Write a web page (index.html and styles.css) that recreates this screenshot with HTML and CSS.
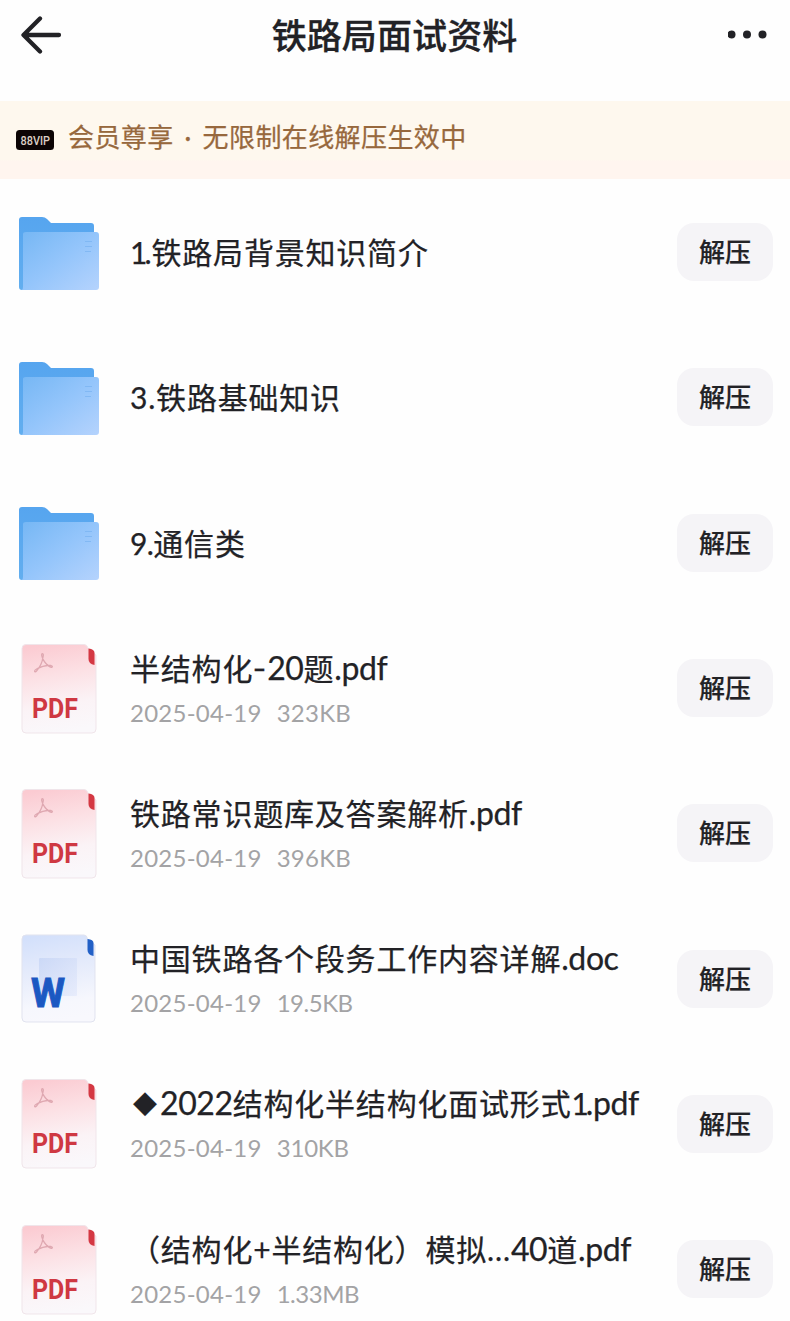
FILE: index.html
```html
<!DOCTYPE html>
<html lang="zh-CN">
<head>
<meta charset="utf-8">
<title>铁路局面试资料</title>
<link rel="stylesheet" href="styles.css">
</head>
<body>
<svg class="defs" aria-hidden="true">
  <defs>
    <linearGradient id="back" x1="0" y1="0" x2="0" y2="1"><stop offset="0" stop-color="#56a5ef"/><stop offset="1" stop-color="#62aeef"/></linearGradient>
    <linearGradient id="front" x1="0" y1="0" x2="1" y2="1"><stop offset="0" stop-color="#76b7f4"/><stop offset=".5" stop-color="#94c5fb"/><stop offset="1" stop-color="#b5d3fd"/></linearGradient>
    <linearGradient id="red" x1=".3" y1="0" x2=".45" y2="1"><stop offset="0" stop-color="#fbcbd2"/><stop offset=".35" stop-color="#fce0e4"/><stop offset=".7" stop-color="#fbf3f6"/><stop offset="1" stop-color="#faf8fb"/></linearGradient>
    <linearGradient id="blue" x1=".3" y1="0" x2=".45" y2="1"><stop offset="0" stop-color="#d3e0fb"/><stop offset=".4" stop-color="#e5ebfb"/><stop offset=".8" stop-color="#f6f7fd"/><stop offset="1" stop-color="#f8f8fd"/></linearGradient>
    <linearGradient id="pane" x1="0" y1="0" x2="1" y2="1"><stop offset="0" stop-color="#c5d4f5"/><stop offset="1" stop-color="#e3e9fb"/></linearGradient>
  </defs>
  <symbol id="folder" viewBox="0 0 82 76">
    <path d="M1 4Q1 1 4 1H24Q27 1 29 3L33 7H73Q76 7 76 10V60H5V74H4Q1 74 1 71Z" fill="url(#back)"/>
    <path d="M5 18Q5 16 8 16H78Q81 16 81 19V71Q81 74 78 74H4Q5 73 5 71Z" fill="url(#front)"/>
    <path d="M67 25.500h7M67 30.500h7M67 35.500h6" stroke="#78b2f1" stroke-width="1" fill="none" opacity=".7"/>
  </symbol>
  <symbol id="pdf" viewBox="0 0 78 92">
    <path d="M5 1.500H63Q66 1.500 67 5L75 12V86Q75 90 71 90H5Q1 90 1 86V5.500Q1 1.500 5 1.500Z" fill="url(#red)" stroke="#f0e5ea" stroke-width="1"/>
    <path d="M67.500 5.500Q73.500 6 73.500 10V22Q67.500 21 67.500 16Z" fill="#d43843"/>
    <path d="M21 13.500C19.500 9.500 23.500 9.500 22 14C21.500 18 19 24 15.500 28C13.500 30 12.500 27.500 15.500 26C20 23.500 25 22 30 22.500C33 23.500 30.500 25.500 27.500 23C24.500 20.500 22 17 21 13.500Z" fill="none" stroke="#dfa8b1" stroke-width="1.300"/>
  </symbol>
  <symbol id="doc" viewBox="0 0 78 92">
    <path d="M5 2H63Q66 2 66.500 6L74 12V85Q74 89 70 89H5Q1 89 1 85V6Q1 2 5 2Z" fill="url(#blue)" stroke="#e1e3ef" stroke-width="1"/>
    <path d="M66.500 6Q72.500 6.500 72.500 10V23Q66.500 22 66.500 17Z" fill="#2260c6"/>
    <rect x="18" y="25" width="38" height="38" rx="1" fill="url(#pane)" opacity=".75"/>
  </symbol>
</svg>
<header class="topbar">
  <svg class="back" viewBox="0 0 42 38"><path d="M19 2.500 2.500 19 19 35.500M3 19H38" fill="none" stroke="#222226" stroke-width="4.300" stroke-linecap="round" stroke-linejoin="round"/></svg>
  <h1>铁路局面试资料</h1>
  <svg class="more" viewBox="0 0 40 10"><g fill="#222226"><circle cx="3.500" cy="4.500" r="4"/><circle cx="19" cy="4.500" r="4"/><circle cx="34.500" cy="4.500" r="4"/></g></svg>
</header>
<div class="banner">
  <svg class="vip" viewBox="0 0 38 20"><rect width="38" height="20" rx="3.500" fill="#0c0505"/><text x="4.500" y="14.600" textLength="29.500" lengthAdjust="spacingAndGlyphs">88VIP</text></svg>
  <p>会员尊享<span class="dot">·</span>无限制在线解压生效中</p>
</div>
<main class="list">
  <div class="row"><svg class="folder"><use href="#folder"/></svg><div class="info"><h2><span class="one">1</span><span class="point">.</span>铁路局背景知识简介</h2></div><button>解压</button></div>
  <div class="row"><svg class="folder"><use href="#folder"/></svg><div class="info"><h2>3.铁路基础知识</h2></div><button>解压</button></div>
  <div class="row"><svg class="folder"><use href="#folder"/></svg><div class="info"><h2><span class="nine">9.</span>通信类</h2></div><button>解压</button></div>
  <div class="row"><svg class="file" viewBox="0 0 78 92"><use href="#pdf"/><text x="11" y="75" class="pdf-label" textLength="46" lengthAdjust="spacingAndGlyphs">PDF</text></svg><div class="info"><h2>半结构化<span class="dash">-</span><span class="latin">20</span>题<span class="latin">.pdf</span></h2><p><span>2025-04-19</span><span>323KB</span></p></div><button>解压</button></div>
  <div class="row"><svg class="file" viewBox="0 0 78 92"><use href="#pdf"/><text x="11" y="75" class="pdf-label" textLength="46" lengthAdjust="spacingAndGlyphs">PDF</text></svg><div class="info"><h2>铁路常识题库及答案解析<span class="latin">.pdf</span></h2><p><span>2025-04-19</span><span>396KB</span></p></div><button>解压</button></div>
  <div class="row"><svg class="file" viewBox="0 0 78 92"><use href="#doc"/><text x="10" y="74" class="doc-label" textLength="34" lengthAdjust="spacingAndGlyphs">W</text></svg><div class="info"><h2>中国铁路各个段务工作内容详解<span class="latin">.doc</span></h2><p><span>2025-04-19</span><span class="tight">19.5KB</span></p></div><button>解压</button></div>
  <div class="row"><svg class="file" viewBox="0 0 78 92"><use href="#pdf"/><text x="11" y="75" class="pdf-label" textLength="46" lengthAdjust="spacingAndGlyphs">PDF</text></svg><div class="info"><h2><span class="diamond">◆</span><span class="latin">2022</span>结构化半结构化面试形式<span class="one">1</span><span class="latin">.pdf</span></h2><p><span>2025-04-19</span><span class="snug">310KB</span></p></div><button>解压</button></div>
  <div class="row"><svg class="file" viewBox="0 0 78 92"><use href="#pdf"/><text x="11" y="75" class="pdf-label" textLength="46" lengthAdjust="spacingAndGlyphs">PDF</text></svg><div class="info"><h2>（结构化+半结构化）模拟<span class="ellipsis">...</span><span class="latin">40</span>道<span class="latin">.pdf</span></h2><p><span>2025-04-19</span><span class="tight">1.33MB</span></p></div><button>解压</button></div>
</main>
</body>
</html>
```
FILE: styles.css
```css
* { box-sizing: border-box; margin: 0; padding: 0; }
body {
  width: 790px;
  height: 1321px;
  overflow: hidden;
  background: #fefefe;
  color: #222226;
  font-family: Lato, "Noto Sans CJK SC", sans-serif;
}
.defs { position: absolute; width: 0; height: 0; }
.topbar {
  height: 101px;
  padding: 0 22px 31px 21px;
  display: grid;
  grid-template-columns: 42px 1fr 40px;
  align-items: center;
}
.back { width: 42px; height: 38px; }
.more { width: 40px; height: 10px; }
h1 {
  font-size: 35px;
  line-height: 50px;
  font-weight: 500;
  text-align: center;
  letter-spacing: 0.1px;
  -webkit-text-stroke: 0.3px #222226;
  padding-right: 2px;
}
.banner {
  height: 78px;
  padding: 0 16px 4px;
  display: flex;
  align-items: center;
  background: linear-gradient(#fef8ee 0 75%, #fff5ef 77%);
}
.vip { width: 38px; height: 20px; margin-top: 4px; }
.vip text { font: 500 12px Roboto, sans-serif; fill: #ddd0c5; }
.banner p {
  margin: -2px 0 0 14px;
  color: #97683d;
  font-size: 26px;
  letter-spacing: 0.4px;
  line-height: 38px;
  white-space: nowrap;
  -webkit-text-stroke: 0.25px #97683d;
}
.dot { display: inline-block; width: 29px; text-align: center; }
.list { padding-top: 0.5px; }
.row {
  height: 145.3px;
  padding: 0 17px 0 19px;
  display: grid;
  grid-template-columns: 111px 1fr 96px;
  align-items: center;
}
.folder { width: 82px; height: 76px; margin: 3px 0 0 -1px; }
.file { width: 78px; height: 92px; margin: 1px 0 0 2px; }
.info { min-width: 0; }
h2 {
  font-size: 30px;
  line-height: 44px;
  font-weight: 400;
  letter-spacing: 0.8px;
  white-space: nowrap;
  -webkit-text-stroke: 0.25px #222226;
}
.latin { font-size: 32px; line-height: 1; letter-spacing: -0.4px; }
.one { letter-spacing: -3px; }
.point { letter-spacing: 0; }
.nine { letter-spacing: -0.6px; }
.dash { display: inline-block; transform: scaleX(1.25) translateY(-1px); margin: 0 1px; }
.ellipsis { letter-spacing: 0.9px; }
.info p {
  display: flex;
  gap: 15px;
  color: #a3a3a5;
  font-size: 24px;
  line-height: 36px;
  letter-spacing: 0.25px;
  margin-top: 5px;
}
.info p .tight { letter-spacing: -0.5px; }
.info p .snug { letter-spacing: -0.2px; }
.diamond {
  display: inline-block;
  width: 30px;
  padding-left: 3px;
  font-size: 24px;
  line-height: 1;
  vertical-align: 2px;
}
button {
  height: 58px;
  padding-top: 1px;
  border: 0;
  border-radius: 17px;
  background: #f5f4f7;
  color: #222226;
  font: 500 26px/57px Lato, "Noto Sans CJK SC", sans-serif;
  -webkit-text-stroke: 0.2px #222226;
}
.pdf-label { font: 700 28px Roboto, sans-serif; fill: #cf3842; }
.doc-label { font: 700 40px Roboto, sans-serif; fill: #1b58c2; stroke: #1b58c2; stroke-width: 1px; }
```
